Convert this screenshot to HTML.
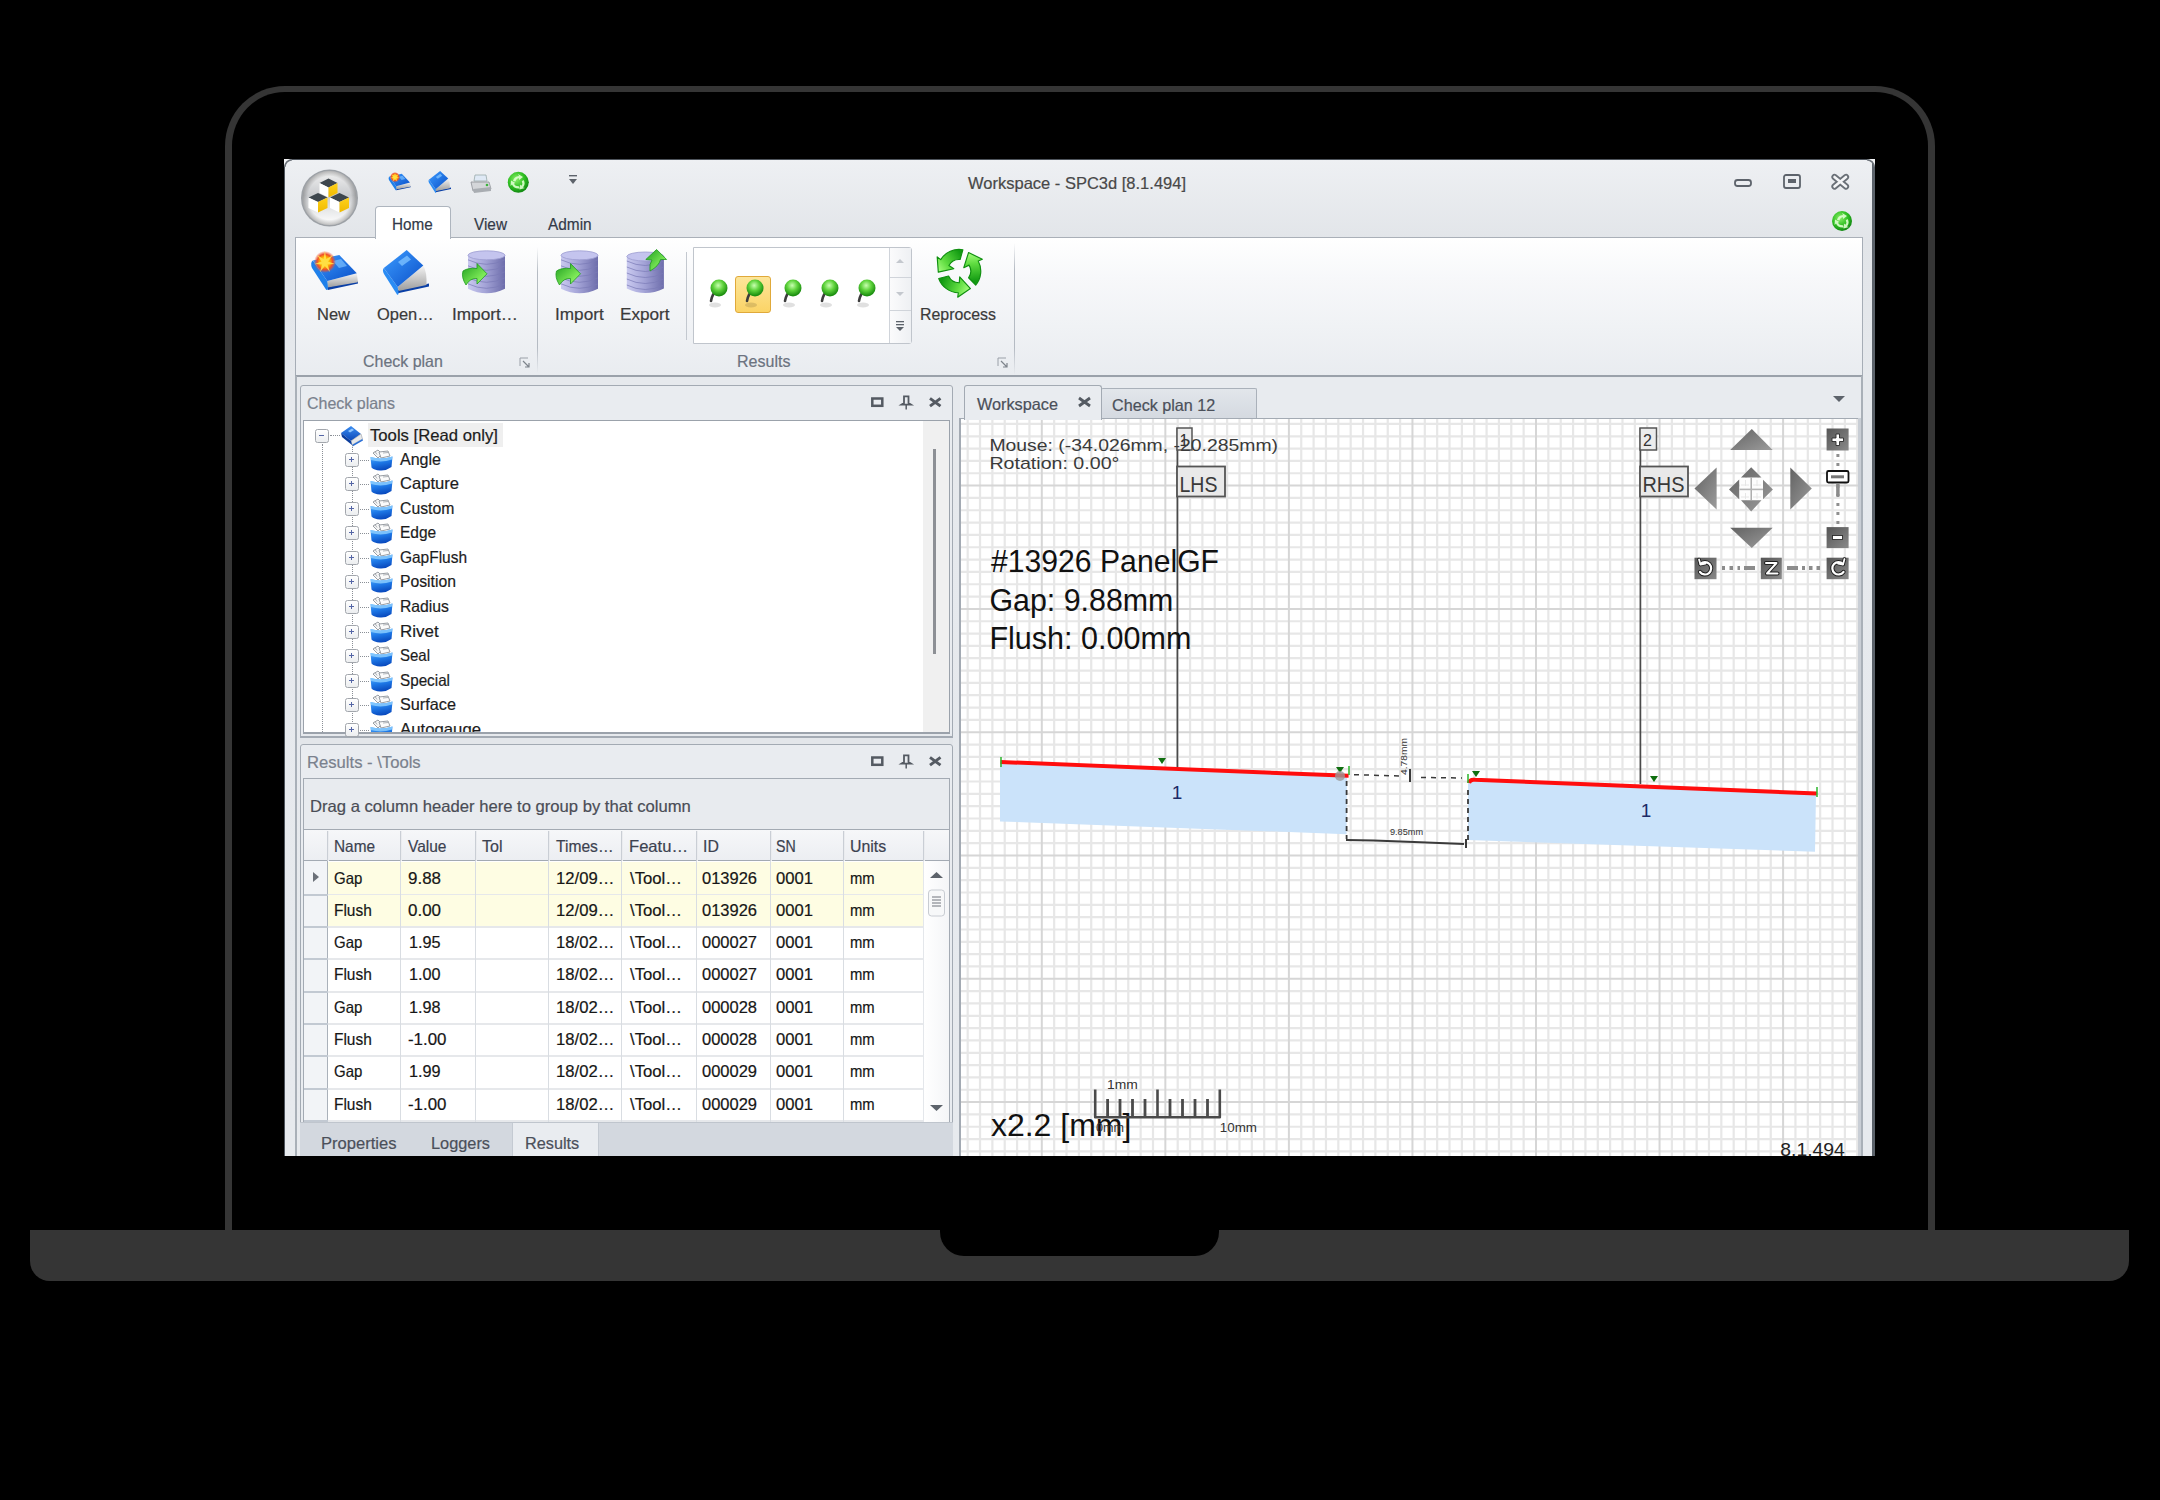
<!DOCTYPE html>
<html><head><meta charset="utf-8">
<style>
*{box-sizing:border-box;margin:0;padding:0}
html,body{width:2160px;height:1500px;background:#000;overflow:hidden;font-family:"Liberation Sans",sans-serif;}
.a{position:absolute}
.t{position:absolute;white-space:nowrap;line-height:1;color:#2c2c2c;-webkit-text-stroke:0.2px currentColor}
#lid{left:225px;top:86px;width:1710px;height:1180px;border:7px solid #353535;border-top-width:6px;border-bottom:none;border-radius:60px 60px 0 0}
#base{left:30px;top:1230px;width:2099px;height:51px;background:#353535;border-radius:0 0 20px 20px}
#notch{left:940px;top:1230px;width:279px;height:26px;background:#000;border-radius:0 0 24px 24px}
#scr{left:284px;top:159px;width:1591px;height:997px;background:#e3e6ea;overflow:hidden}

#win{left:0;top:0;width:1591px;height:997px;background:linear-gradient(#eef0f3,#e2e5e9 80px,#e6e9ed 220px,#e7eaee);border-left:1px solid #4e545c;border-top:1px solid #4e545c}
#winr{left:1588px;top:0;width:3px;height:997px;background:#5c636b}
#rib{left:11px;top:78px;width:1568px;height:140px;border:1px solid #a6adb6;border-top:1.5px solid #aab0b8;border-bottom:2px solid #9aa1aa;background:linear-gradient(#ffffff,#f7f8fa 40px,#e9ecf0);}
#hometab{left:91px;top:47px;width:76px;height:33px;z-index:1;background:#ffffff;border:1px solid #aeb5be;border-bottom:none;border-radius:4px 4px 0 0}
.rtab{font-size:16.5px;color:#333a48}
.rl{font-size:16.5px;color:#3a3a3a}
.gl{font-size:16.5px;color:#6c7380}
.sep{position:absolute;width:1px;background:linear-gradient(rgba(170,176,185,0),#b5bbc3 20%,#b5bbc3 80%,rgba(170,176,185,0))}

.pnl{position:absolute;border:1px solid #a3aab3;border-radius:3px 3px 0 0;background:#e9ecf0}
.ph{font-size:16.5px;color:#7a818d}
.tr{font-size:16.5px;color:#1c1c1c}
.exp{position:absolute;z-index:1;width:14px;height:14px;border:1.6px solid #a2a6ac;border-radius:2.5px;background:linear-gradient(#ffffff,#eceef0)}
.exp:before{content:"";position:absolute;left:2.7px;top:4.9px;width:5.4px;height:1.6px;background:#5566a6}
.exp.p:after{content:"";position:absolute;left:4.6px;top:2.9px;width:1.6px;height:5.6px;background:#5566a6}
.dh{position:absolute;height:1px;border-top:1px dotted #8a8f96}
.dv{position:absolute;width:1px;border-left:1px dotted #8a8f96}
.gh{font-size:16.5px;color:#3c4250}
.gc{font-size:16.5px;color:#161616}
.vl{position:absolute;width:1px;background:#d9dde2}
.hl{position:absolute;height:1px;background:#d9dde2}
</style></head>
<body>
<div id="lid" class="a"></div>
<div id="base" class="a"></div>
<div id="notch" class="a"></div>
<div id="scr" class="a">

<div id="win" class="a"></div>
<div id="winr" class="a"></div>
<svg class="a" style="left:0;top:0;z-index:5" width="10" height="10" viewBox="0 0 10 10"><path d="M0 0 H8 Q1.5 1.5 0 8Z" fill="#f2f3f5"/><path d="M8 0.8 Q1.5 1.5 0.8 8" stroke="#6b7178" stroke-width="1.5" fill="none"/></svg>
<svg class="a" style="left:1581px;top:0;z-index:5" width="10" height="10" viewBox="0 0 10 10"><path d="M10 0 H2 Q8.5 1.5 10 8Z" fill="#f2f3f5"/><path d="M2 0.8 Q8.5 1.5 9.2 8" stroke="#6b7178" stroke-width="1.5" fill="none"/></svg>
<!-- title -->
<div class="t" style="left:683.8px;top:15.6px;font-size:16.5px;color:#484848;transform-origin:0 0;transform:scaleX(1.0001)">Workspace - SPC3d [8.1.494]</div>
<!-- window buttons -->
<svg class="a" style="left:1448px;top:14px" width="120" height="22" viewBox="0 0 120 22">
 <rect x="3" y="7" width="16" height="6" rx="2.5" fill="none" stroke="#5d636b" stroke-width="1.8"/>
 <rect x="52" y="2" width="16" height="13" rx="2" fill="none" stroke="#5d636b" stroke-width="1.8"/>
 <rect x="56" y="6" width="8" height="4" fill="#5d636b"/>
 <path d="M102.5 4 L114 13.5 M114 4 L102.5 13.5" stroke="#6a7077" stroke-width="6.2" stroke-linecap="round"/>
 <path d="M102.5 4 L114 13.5 M114 4 L102.5 13.5" stroke="#f4f5f7" stroke-width="2.6" stroke-linecap="round"/>
</svg>
<!-- app logo -->
<svg class="a" style="left:-284px;top:-159px;z-index:1" width="2160" height="1500" viewBox="0 0 2160 1500">
 <defs>
  <linearGradient id="lgA" x1="0" y1="0" x2="0" y2="1"><stop offset="0" stop-color="#f2f2f2"/><stop offset="0.45" stop-color="#c9cbce"/><stop offset="0.75" stop-color="#e9eaeb"/><stop offset="1" stop-color="#ffffff"/></linearGradient>
  <radialGradient id="lgB" cx="50%" cy="50%" r="50%"><stop offset="0.8" stop-color="#000" stop-opacity="0"/><stop offset="1" stop-color="#000" stop-opacity="0.25"/></radialGradient>
  <linearGradient id="yl" x1="0" y1="0" x2="0" y2="1"><stop offset="0" stop-color="#ffd21a"/><stop offset="1" stop-color="#efb900"/></linearGradient>
 </defs>
 <circle cx="329.5" cy="198" r="28.5" fill="#9da1a6"/>
 <circle cx="329.5" cy="198" r="27" fill="url(#lgA)"/>
 <circle cx="329.5" cy="198" r="27" fill="url(#lgB)"/>
 <path d="M328.5 178.5 L337.5 183 L328.5 187.5 L319.5 183Z" fill="#3d464d"/><path d="M319.5 183 L328.5 187.5 L328.5 197.5 L319.5 193Z" fill="#ffffff"/><path d="M337.5 183 L328.5 187.5 L328.5 197.5 L337.5 193Z" fill="url(#yl)"/>
 <path d="M318 193.0 L327.5 197.5 L318 202.0 L308.5 197.5Z" fill="#3d464d"/><path d="M308.5 197.5 L318 202.0 L318 212.5 L308.5 208.0Z" fill="#ffffff"/><path d="M327.5 197.5 L318 202.0 L318 212.5 L327.5 208.0Z" fill="url(#yl)"/>
 <path d="M339.5 193.0 L349.0 197.5 L339.5 202.0 L330.0 197.5Z" fill="#3d464d"/><path d="M330.0 197.5 L339.5 202.0 L339.5 212.5 L330.0 208.0Z" fill="#ffffff"/><path d="M349.0 197.5 L339.5 202.0 L339.5 212.5 L349.0 208.0Z" fill="url(#yl)"/>
</svg>
<!-- QAT icons -->
<svg class="a" style="left:102px;top:10px" width="300" height="26" viewBox="0 0 300 26">
 <defs>
  <linearGradient id="bk" x1="0" y1="0" x2="0" y2="1"><stop offset="0" stop-color="#3a8cf0"/><stop offset="1" stop-color="#0a47b8"/></linearGradient>
  <radialGradient id="gr" cx="40%" cy="35%" r="60%"><stop offset="0" stop-color="#9cf07c"/><stop offset="1" stop-color="#1f9a12"/></radialGradient>
 </defs>
 <g transform="translate(83,3)">
  <path d="M6 3 L17 3 L18 9 L5 9Z" fill="#dfe9f5" stroke="#9aa" stroke-width="0.8"/>
  <path d="M2 10 L20 10 L22 17 L4 19Z" fill="#d4d6d9" stroke="#8d9196" stroke-width="0.8"/>
  <path d="M4 17 L22 15 L22 19 L5 21Z" fill="#a9adb2"/>
  <circle cx="18" cy="13" r="1.3" fill="#3bb33b"/>
 </g>
  <g transform="translate(183,6)">
  <rect x="0" y="0" width="8" height="1.4" fill="#5d636b"/><path d="M0 4 L8 4 L4 9Z" fill="#5d636b"/>
 </g>
</svg>
<svg class="a" style="left:223px;top:12px" width="24" height="24" viewBox="0 0 24 24">
 <defs><radialGradient id="qb" cx="40%" cy="35%" r="65%"><stop offset="0" stop-color="#8cf06a"/><stop offset="0.6" stop-color="#2fbf22"/><stop offset="1" stop-color="#128a12"/></radialGradient></defs>
 <circle cx="11.3" cy="11.3" r="10.5" fill="url(#qb)"/>
 <path d="M6 10 Q7 5.5 12 5 L11 3 L16 6 L12 9 L12 7.3 Q9 7.5 8.5 10.5Z M16.5 9 Q19 12.5 16 16.5 L18 17 L12.5 18.5 L13 13.5 L14.3 14.8 Q16.2 12.8 14.8 10.2Z M12.5 17.5 Q7 18 5 13.5 L3.5 15 L4 9.5 L8.5 12 L6.8 12.7 Q8.5 15.5 12 15.2Z" fill="#dfffd0" opacity="0.9"/>
</svg>
<!-- tabs -->

<div class="t rtab" style="left:189.6px;top:56.7px;transform-origin:0 0;transform:scaleX(0.9304)">View</div>
<div class="t rtab" style="left:263.5px;top:56.7px;transform-origin:0 0;transform:scaleX(0.9341)">Admin</div>
<!-- ribbon right icon -->
<svg class="a" style="left:1547px;top:51px" width="24" height="24" viewBox="0 0 24 24">
 <circle cx="11" cy="11" r="10" fill="url(#qb)"/>
 <path d="M6 10 Q7 5.5 12 5 L11 3 L16 6 L12 9 L12 7.3 Q9 7.5 8.5 10.5Z M16.5 9 Q19 12.5 16 16.5 L18 17 L12.5 18.5 L13 13.5 L14.3 14.8 Q16.2 12.8 14.8 10.2Z M12.5 17.5 Q7 18 5 13.5 L3.5 15 L4 9.5 L8.5 12 L6.8 12.7 Q8.5 15.5 12 15.2Z" fill="#dfffd0" opacity="0.9"/>
</svg>
<div id="rib" class="a"></div>
<div id="hometab" class="a"></div>
<div class="t rtab" style="left:108.0px;top:56.7px;z-index:2;transform-origin:0 0;transform:scaleX(0.9247)">Home</div>
<!-- ribbon group 1 -->
<svg class="a" style="left:-284px;top:-159px" width="2160" height="1500" viewBox="0 0 2160 1500">
 <defs>
  <linearGradient id="bkL" x1="0" y1="0" x2="1" y2="1"><stop offset="0" stop-color="#3c9cff"/><stop offset="1" stop-color="#0a4fc8"/></linearGradient>
  <linearGradient id="pg" x1="0" y1="0" x2="0" y2="1"><stop offset="0" stop-color="#f4f4f4"/><stop offset="1" stop-color="#9c9c9c"/></linearGradient>
  <linearGradient id="db" x1="0" y1="0" x2="1" y2="0"><stop offset="0" stop-color="#c9c9ef"/><stop offset="0.45" stop-color="#a5a5d8"/><stop offset="1" stop-color="#6d6dab"/></linearGradient>
  <linearGradient id="ga" x1="0" y1="0" x2="1" y2="1"><stop offset="0" stop-color="#1e9e1e"/><stop offset="0.7" stop-color="#7eea58"/><stop offset="1" stop-color="#b8ff9a"/></linearGradient>
  <radialGradient id="burst" cx="50%" cy="50%" r="50%"><stop offset="0" stop-color="#ffd400"/><stop offset="0.45" stop-color="#ffb000"/><stop offset="0.7" stop-color="#f0502a"/><stop offset="1" stop-color="#f0502a" stop-opacity="0"/></radialGradient>
 </defs>
<g id="bookNew">
 <!-- New book -->
 <path d="M327.9 290 L358 283.5 L358 281 L327.5 287Z" fill="#0a3fa6"/>
 <path d="M327.3 281 L356.8 273.3 L358 282.3 L327.3 287.6Z" fill="url(#pg)"/>
 <path d="M312.8 260.6 Q310 263 312 268 L326 289.5 Q328 291 328 288 L327.3 281.1Z" fill="#1f80ea"/>
 <path d="M312.8 260.6 L339.3 254.9 L356.8 273.3 L327.3 281.1Z" fill="url(#bkL)"/>
 <path d="M333 261 L341 259 L347 266 L339 268Z" fill="#7cc0ff" opacity="0.7"/>
 <circle cx="324.9" cy="261.9" r="11" fill="url(#burst)"/>
 <path d="M324.9 251 L326.3 259 L333 255 L328 261.5 L335 264 L327.5 264.5 L330 272 L324.9 266 L320 272 L322 264.5 L314.5 264 L321.5 261.5 L317 255 L323.5 259Z" fill="#ffe14a" opacity="0.9"/>
</g>
<g id="bookOpen">
 <!-- Open book -->
 <path d="M397.8 293.2 L429 286.5 L429 283.5 L398 290Z" fill="#0a3fa6"/>
 <path d="M423.3 265.5 Q427 272 426.5 285 L398.5 291 L397.7 287.1Z" fill="url(#pg)"/>
 <path d="M383.8 267.9 Q382 270 384 274 L397 294.4 Q399 295.5 398.5 292 L397.7 287.1Z" fill="#2a8cf4"/>
 <path d="M406.7 250.1 L423.3 265.5 L397.7 287.1 L383.8 267.9Z" fill="url(#bkL)"/>
 <path d="M398 262 L407 255.5 L411 259.5 L402 266Z" fill="#7cc0ff" opacity="0.8"/>
</g>
 <!-- Import... -->
 <path d="M468 255.3 L468 288.8 Q486.5 297.8 505 288.8 L505 255.3Z" fill="url(#db)"/>
 <path d="M468 259.8 Q486.5 268.8 505 259.8 M468 265.8 Q486.5 274.8 505 265.8 M468 271.8 Q486.5 280.8 505 271.8 M468 277.8 Q486.5 286.8 505 277.8 M468 283.8 Q486.5 292.8 505 283.8" stroke="#7b7bb6" stroke-width="0.9" fill="none" opacity="0.8"/>
 <ellipse cx="486.5" cy="255.3" rx="18.5" ry="4.5" fill="#c4c4ee" stroke="#9d9dd0" stroke-width="0.8"/>
 <path d="M463 271 Q468 267.5 477 268.5 L477 263.5 L487 273.8 L477 284 L477 278.5 Q470 278 466 285 Q461 277 463 271Z" fill="url(#ga)" stroke="#1f9a1f" stroke-width="0.8"/>
 <!-- Import -->
 <path d="M561 255.3 L561 288.8 Q579.5 297.8 598 288.8 L598 255.3Z" fill="url(#db)"/>
 <path d="M561 259.8 Q579.5 268.8 598 259.8 M561 265.8 Q579.5 274.8 598 265.8 M561 271.8 Q579.5 280.8 598 271.8 M561 277.8 Q579.5 286.8 598 277.8 M561 283.8 Q579.5 292.8 598 283.8" stroke="#7b7bb6" stroke-width="0.9" fill="none" opacity="0.8"/>
 <ellipse cx="579.5" cy="255.3" rx="18.5" ry="4.5" fill="#c4c4ee" stroke="#9d9dd0" stroke-width="0.8"/>
 <path d="M556.5 271 Q561.5 267.5 570.5 268.5 L570.5 263.5 L580.5 273.8 L570.5 284 L570.5 278.5 Q563.5 278 559.5 285 Q554.5 277 556.5 271Z" fill="url(#ga)" stroke="#1f9a1f" stroke-width="0.8"/>
 <!-- Export -->
 <path d="M626.8 256.5 L626.8 288.5 Q645.3499999999999 297.5 663.9 288.5 L663.9 256.5Z" fill="url(#db)"/>
 <path d="M626.8 261 Q645.3499999999999 270.0 663.9 261 M626.8 267 Q645.3499999999999 276.0 663.9 267 M626.8 273 Q645.3499999999999 282.0 663.9 273 M626.8 279 Q645.3499999999999 288.0 663.9 279 M626.8 285 Q645.3499999999999 294.0 663.9 285" stroke="#7b7bb6" stroke-width="0.9" fill="none" opacity="0.8"/>
 <ellipse cx="645.3499999999999" cy="256.5" rx="18.55000000000001" ry="4.5" fill="#c4c4ee" stroke="#9d9dd0" stroke-width="0.8"/>
 <path d="M650 271 Q649 264 652 260 L645.8 259.5 L656.6 249.5 L666.6 259.5 L660.5 259.5 Q659 266 650 271Z" fill="url(#ga)" stroke="#1f9a1f" stroke-width="0.8"/>
</svg>
<svg class="a" style="left:-284px;top:-159px" width="2160" height="1500" viewBox="0 0 2160 1500">
 <use href="#bookNew" transform="translate(388,172) scale(0.47) translate(-310,-251)"/>
 <use href="#bookOpen" transform="translate(428,171) scale(0.49) translate(-382,-250)"/>
</svg>
<div class="t rl" style="left:33.0px;top:146.7px;transform-origin:0 0;transform:scaleX(0.9995)">New</div>
<div class="t rl" style="left:93.0px;top:146.7px;transform-origin:0 0;transform:scaleX(0.9969)">Open…</div>
<div class="t rl" style="left:168.2px;top:146.7px;transform-origin:0 0;transform:scaleX(1.0432)">Import…</div>
<div class="t rl" style="left:271.2px;top:146.7px;transform-origin:0 0;transform:scaleX(1.0414)">Import</div>
<div class="t rl" style="left:336.4px;top:146.7px;transform-origin:0 0;transform:scaleX(1.0401)">Export</div>
<div class="t gl" style="left:78.7px;top:193.7px;transform-origin:0 0;transform:scaleX(0.9665)">Check plan</div>
<div class="t gl" style="left:453.4px;top:193.7px;transform-origin:0 0;transform:scaleX(0.9704)">Results</div>
<div class="sep" style="left:253px;top:88px;height:126px"></div>
<div class="sep" style="left:402px;top:93px;height:88px;background:#c3c8cf"></div>
<div class="sep" style="left:730px;top:84px;height:132px"></div>
<!-- dialog launchers -->
<svg class="a" style="left:235px;top:198px" width="12" height="12" viewBox="0 0 12 12"><path d="M1 9 L1 1 L9 1" stroke="#9aa0a8" fill="none"/><path d="M4 4 L10 10 M10 6 L10 10 L6 10" stroke="#7d838b" fill="none" stroke-width="1.2"/></svg>
<svg class="a" style="left:713px;top:198px" width="12" height="12" viewBox="0 0 12 12"><path d="M1 9 L1 1 L9 1" stroke="#9aa0a8" fill="none"/><path d="M4 4 L10 10 M10 6 L10 10 L6 10" stroke="#7d838b" fill="none" stroke-width="1.2"/></svg>
<!-- gallery -->
<div class="a" style="left:409px;top:88px;width:219px;height:97px;border:1px solid #c0c5cc;border-radius:0 3px 3px 0;background:#fff"></div>
<div class="a" style="left:605px;top:89px;width:22px;height:95px;border-left:1px solid #d0d4da;background:linear-gradient(90deg,#fbfbfc,#eef0f3)"></div>
<div class="a" style="left:605px;top:118px;width:22px;height:1px;background:#d0d4da"></div>
<div class="a" style="left:605px;top:151px;width:22px;height:1px;background:#d0d4da"></div>
<svg class="a" style="left:605px;top:89px" width="22" height="95" viewBox="0 0 22 95">
 <path d="M7 15 L11 11 L15 15Z" fill="#c4c8ce"/><path d="M7 44 L11 48 L15 44Z" fill="#c4c8ce"/>
 <rect x="7" y="73" width="8" height="1.3" fill="#5d636b"/><rect x="7" y="76" width="8" height="1.3" fill="#5d636b"/><path d="M7 79 L15 79 L11 83Z" fill="#5d636b"/>
</svg>
<div class="a" style="left:451px;top:117px;width:36px;height:37px;border:1px solid #e0a93a;border-radius:3px;background:linear-gradient(#fde59a,#fbd466)"></div>
<svg class="a" style="left:420px;top:118px" width="180" height="40" viewBox="0 0 180 40">
 <defs><radialGradient id="pin" cx="45%" cy="35%" r="60%"><stop offset="0" stop-color="#c8ffb0"/><stop offset="0.5" stop-color="#5fd33c"/><stop offset="1" stop-color="#1c8f10"/></radialGradient></defs>
 <g id="pn"><ellipse cx="11" cy="28" rx="6" ry="2.5" fill="#000" opacity="0.12"/><path d="M13 13 Q8 17 7 24" stroke="#3d3d3d" stroke-width="2.6" stroke-linecap="round" fill="none"/><circle cx="15" cy="11" r="8.5" fill="url(#pin)"/></g>
 <use href="#pn" x="36"/><use href="#pn" x="74"/><use href="#pn" x="111"/><use href="#pn" x="148"/>
</svg>
<!-- reprocess -->
<svg class="a" style="left:647.5px;top:85.1px" width="54.2" height="54.2" viewBox="-5 -5 56 56">
<defs>
<linearGradient id="rc0" gradientUnits="userSpaceOnUse" x1="26.0" y1="6.3" x2="1.5" y2="24.1"><stop offset="0" stop-color="#129a12"/><stop offset="0.6" stop-color="#5fdc40"/><stop offset="1" stop-color="#a8ff80"/></linearGradient>
<linearGradient id="rc1" gradientUnits="userSpaceOnUse" x1="36.0" y1="33.9" x2="32.8" y2="3.8"><stop offset="0" stop-color="#129a12"/><stop offset="0.6" stop-color="#5fdc40"/><stop offset="1" stop-color="#a8ff80"/></linearGradient>
<linearGradient id="rc2" gradientUnits="userSpaceOnUse" x1="7.0" y1="28.8" x2="34.7" y2="41.0"><stop offset="0" stop-color="#129a12"/><stop offset="0.6" stop-color="#5fdc40"/><stop offset="1" stop-color="#a8ff80"/></linearGradient>
</defs>
<path d="M26.89 0.94 A22.40 22.40 0 0 0 4.00 11.13 L0.36 8.29 L1.53 24.13 L17.52 20.56 L12.50 17.18 A12.00 12.00 0 0 1 24.05 11.05Z" fill="url(#rc0)" stroke="#0f8f0f" stroke-width="1.2" stroke-linejoin="round"/>
<path d="M40.16 37.40 A22.40 22.40 0 0 0 42.78 12.48 L47.06 10.74 L32.76 3.84 L27.85 19.47 L33.29 16.82 A12.00 12.00 0 0 1 32.83 29.88Z" fill="url(#rc1)" stroke="#0f8f0f" stroke-width="1.2" stroke-linejoin="round"/>
<path d="M1.95 30.66 A22.40 22.40 0 0 0 22.22 45.39 L21.59 49.96 L34.71 41.03 L23.63 28.97 L23.21 35.00 A12.00 12.00 0 0 1 12.12 28.07Z" fill="url(#rc2)" stroke="#0f8f0f" stroke-width="1.2" stroke-linejoin="round"/>
</svg>
<div class="t rl" style="left:636.0px;top:146.7px;transform-origin:0 0;transform:scaleX(0.9635)">Reprocess</div>
<div class="pnl" style="left:16px;top:226px;width:653px;height:352px"></div>
<div class="t ph" style="left:23.0px;top:235.6px;transform-origin:0 0;transform:scaleX(0.9690)">Check plans</div>
<svg class="a" style="left:584px;top:236px" width="80" height="16" viewBox="0 0 80 16">
 <rect x="4.3" y="3.5" width="10" height="7.3" fill="none" stroke="#545a62" stroke-width="2.5"/>
 <path d="M36 1.3 L40.5 1.3 L40.5 8 L43 9.6 L33.5 9.6 L36 8Z" fill="none" stroke="#545a62" stroke-width="1.8"/><path d="M38.2 10 L38.2 14.5" stroke="#545a62" stroke-width="1.5"/>
 <path d="M62 3.3 L72.5 11.2 M72.5 3.3 L62 11.2" stroke="#545a62" stroke-width="2.9"/>
</svg>
<div class="a" style="left:19px;top:261px;width:647px;height:315px;border:1px solid #9ba2ab;border-bottom:2px solid #9ba2ab;background:#fff"></div>
<div class="a" style="left:639px;top:262px;width:26px;height:312px;background:#f0f0f0"></div>
<div class="a" style="left:649px;top:290px;width:3px;height:205px;background:#8d9095"></div>
<svg width="0" height="0" style="position:absolute"><defs>
<linearGradient id="fb" x1="0" y1="0" x2="0.3" y2="1"><stop offset="0" stop-color="#55b0ff"/><stop offset="0.5" stop-color="#1f7ae8"/><stop offset="1" stop-color="#0a4cc0"/></linearGradient>
<g id="fold"><path d="M4 4 L9 1 L13 5 L9 9Z" fill="#f6f6f6" stroke="#8d939a" stroke-width="0.9"/>
<path d="M10 3 L19 2 L21 7 L12 9Z" fill="#fbfbfb" stroke="#8d939a" stroke-width="0.9"/>
<path d="M6 2.5 L8 5.5 M14 4 L19 3.5" stroke="#9aa0a6" stroke-width="0.8"/>
<path d="M1.5 8 Q12 11 23.5 7.5 L22.5 18 Q17 22 11 21.5 Q5 21 2.5 18.5Z" fill="url(#fb)"/>
<path d="M1.5 8 Q12 11 23.5 7.5 L23 10.5 Q12 14 2 11Z" fill="#8fd0ff" opacity="0.8"/></g>
</defs></svg>
<div class="a" style="left:84px;top:264px;width:135px;height:24px;background:#efefef"></div>
<div class="exp" style="left:31px;top:270px"></div>
<div class="dh" style="left:46px;top:276px;width:10px"></div>
<svg class="a" style="left:56px;top:266px" width="24" height="22" viewBox="0 0 24 22"><path d="M1 8 L11 1 L21 9 L11 16Z" fill="url(#bk)"/><path d="M8 6 L12 3.5 L14 5 L10 7.5Z" fill="#8cc4ff"/><path d="M11 16 L21 9 L22.5 14 L12 20Z" fill="#e6e8ea" stroke="#9aa0a6" stroke-width="0.6"/><path d="M1 8 L11 16 L12 20 L2 12Z" fill="#0b3d9c"/><path d="M12 20 L22.5 14 L23 15.5 L12.5 21.5Z" fill="#2a6fd6"/></svg>
<div class="t tr" style="left:85.8px;top:267.6px;transform-origin:0 0;transform:scaleX(1.0112)">Tools [Read only]</div>
<div class="dv" style="left:38px;top:285px;height:290px"></div>
<div class="exp p" style="left:61px;top:294px"></div>
<div class="dh" style="left:76px;top:301px;width:9px"></div>
<svg class="a" style="left:85px;top:290px" width="26" height="22" viewBox="0 0 26 22"><use href="#fold"/></svg>
<div class="t tr" style="left:115.7px;top:291.6px;transform-origin:0 0;transform:scaleX(0.9715)">Angle</div>
<div class="exp p" style="left:61px;top:318px"></div>
<div class="dh" style="left:76px;top:325px;width:9px"></div>
<svg class="a" style="left:85px;top:314px" width="26" height="22" viewBox="0 0 26 22"><use href="#fold"/></svg>
<div class="t tr" style="left:115.7px;top:315.6px;transform-origin:0 0;transform:scaleX(1.0051)">Capture</div>
<div class="exp p" style="left:61px;top:343px"></div>
<div class="dh" style="left:76px;top:350px;width:9px"></div>
<svg class="a" style="left:85px;top:339px" width="26" height="22" viewBox="0 0 26 22"><use href="#fold"/></svg>
<div class="t tr" style="left:115.7px;top:340.6px;transform-origin:0 0;transform:scaleX(0.9550)">Custom</div>
<div class="exp p" style="left:61px;top:367px"></div>
<div class="dh" style="left:76px;top:374px;width:9px"></div>
<svg class="a" style="left:85px;top:363px" width="26" height="22" viewBox="0 0 26 22"><use href="#fold"/></svg>
<div class="t tr" style="left:115.7px;top:364.6px;transform-origin:0 0;transform:scaleX(0.9391)">Edge</div>
<div class="exp p" style="left:61px;top:392px"></div>
<div class="dh" style="left:76px;top:399px;width:9px"></div>
<svg class="a" style="left:85px;top:388px" width="26" height="22" viewBox="0 0 26 22"><use href="#fold"/></svg>
<div class="t tr" style="left:115.7px;top:389.6px;transform-origin:0 0;transform:scaleX(0.9364)">GapFlush</div>
<div class="exp p" style="left:61px;top:416px"></div>
<div class="dh" style="left:76px;top:423px;width:9px"></div>
<svg class="a" style="left:85px;top:412px" width="26" height="22" viewBox="0 0 26 22"><use href="#fold"/></svg>
<div class="t tr" style="left:115.7px;top:413.6px;transform-origin:0 0;transform:scaleX(0.9540)">Position</div>
<div class="exp p" style="left:61px;top:441px"></div>
<div class="dh" style="left:76px;top:448px;width:9px"></div>
<svg class="a" style="left:85px;top:437px" width="26" height="22" viewBox="0 0 26 22"><use href="#fold"/></svg>
<div class="t tr" style="left:115.7px;top:438.6px;transform-origin:0 0;transform:scaleX(0.9538)">Radius</div>
<div class="exp p" style="left:61px;top:466px"></div>
<div class="dh" style="left:76px;top:473px;width:9px"></div>
<svg class="a" style="left:85px;top:462px" width="26" height="22" viewBox="0 0 26 22"><use href="#fold"/></svg>
<div class="t tr" style="left:115.7px;top:463.6px;transform-origin:0 0;transform:scaleX(1.0268)">Rivet</div>
<div class="exp p" style="left:61px;top:490px"></div>
<div class="dh" style="left:76px;top:497px;width:9px"></div>
<svg class="a" style="left:85px;top:486px" width="26" height="22" viewBox="0 0 26 22"><use href="#fold"/></svg>
<div class="t tr" style="left:115.7px;top:487.6px;transform-origin:0 0;transform:scaleX(0.9082)">Seal</div>
<div class="exp p" style="left:61px;top:515px"></div>
<div class="dh" style="left:76px;top:522px;width:9px"></div>
<svg class="a" style="left:85px;top:511px" width="26" height="22" viewBox="0 0 26 22"><use href="#fold"/></svg>
<div class="t tr" style="left:115.7px;top:512.6px;transform-origin:0 0;transform:scaleX(0.9238)">Special</div>
<div class="exp p" style="left:61px;top:539px"></div>
<div class="dh" style="left:76px;top:546px;width:9px"></div>
<svg class="a" style="left:85px;top:535px" width="26" height="22" viewBox="0 0 26 22"><use href="#fold"/></svg>
<div class="t tr" style="left:115.7px;top:536.6px;transform-origin:0 0;transform:scaleX(0.9846)">Surface</div>
<div class="exp p" style="left:61px;top:564px"></div>
<div class="dh" style="left:76px;top:571px;width:9px"></div>
<svg class="a" style="left:85px;top:560px" width="26" height="22" viewBox="0 0 26 22"><use href="#fold"/></svg>
<div class="t tr" style="left:115.7px;top:561.6px;transform-origin:0 0;transform:scaleX(1.0147)">Autogauge</div>
<div class="dv" style="left:68px;top:286px;height:289px"></div>
<div class="a" style="left:19px;top:573px;width:647px;height:2px;background:#9ba2ab"></div>
<div class="a" style="left:17px;top:575px;width:651px;height:2px;background:#e6e9ed"></div>
<div class="a" style="left:16px;top:577px;width:653px;height:1.6px;background:#a3aab3"></div>
<div class="a" style="left:16px;top:578.6px;width:653px;height:6.4px;background:#e3e6ea"></div>
<div class="pnl" style="left:16px;top:585px;width:653px;height:381px"></div>
<div class="t ph" style="left:23.3px;top:594.6px;transform-origin:0 0;transform:scaleX(1.0080)">Results - \Tools</div>
<svg class="a" style="left:584px;top:595px" width="80" height="16" viewBox="0 0 80 16">
 <rect x="4.3" y="3.5" width="10" height="7.3" fill="none" stroke="#545a62" stroke-width="2.5"/>
 <path d="M36 1.3 L40.5 1.3 L40.5 8 L43 9.6 L33.5 9.6 L36 8Z" fill="none" stroke="#545a62" stroke-width="1.8"/><path d="M38.2 10 L38.2 14.5" stroke="#545a62" stroke-width="1.5"/>
 <path d="M62 3.3 L72.5 11.2 M72.5 3.3 L62 11.2" stroke="#545a62" stroke-width="2.9"/>
</svg>
<div class="a" style="left:19px;top:619px;width:647px;height:345px;border:1px solid #a3aab3;background:#fff"></div>
<div class="a" style="left:20px;top:620px;width:645px;height:51px;background:#e8ebef;border-bottom:1px solid #a3aab3"></div>
<div class="t" style="left:26.0px;top:638.6px;font-size:16.5px;color:#4a4d56;transform-origin:0 0;transform:scaleX(1.0077)">Drag a column header here to group by that column</div>
<div class="a" style="left:20px;top:671px;width:645px;height:31px;background:linear-gradient(#f6f7f9,#eceef2);border-bottom:1px solid #a3aab3"></div>
<div class="t gh" style="left:49.6px;top:678.6px;transform-origin:0 0;transform:scaleX(0.9315)">Name</div>
<div class="t gh" style="left:123.6px;top:678.6px;transform-origin:0 0;transform:scaleX(0.9394)">Value</div>
<div class="t gh" style="left:197.5px;top:678.6px;transform-origin:0 0;transform:scaleX(0.9719)">Tol</div>
<div class="t gh" style="left:271.5px;top:678.6px;transform-origin:0 0;transform:scaleX(0.9455)">Times…</div>
<div class="t gh" style="left:344.7px;top:678.6px;transform-origin:0 0;transform:scaleX(1.0051)">Featu…</div>
<div class="t gh" style="left:418.6px;top:678.6px;transform-origin:0 0;transform:scaleX(0.9576)">ID</div>
<div class="t gh" style="left:491.8px;top:678.6px;transform-origin:0 0;transform:scaleX(0.8594)">SN</div>
<div class="t gh" style="left:565.8px;top:678.6px;transform-origin:0 0;transform:scaleX(0.9629)">Units</div>
<div class="a" style="left:43px;top:672px;width:2px;height:30px;background:linear-gradient(90deg,#b9bfc8,#fbfbfc)"></div>
<div class="a" style="left:116px;top:672px;width:2px;height:30px;background:linear-gradient(90deg,#b9bfc8,#fbfbfc)"></div>
<div class="a" style="left:191px;top:672px;width:2px;height:30px;background:linear-gradient(90deg,#b9bfc8,#fbfbfc)"></div>
<div class="a" style="left:264px;top:672px;width:2px;height:30px;background:linear-gradient(90deg,#b9bfc8,#fbfbfc)"></div>
<div class="a" style="left:337px;top:672px;width:2px;height:30px;background:linear-gradient(90deg,#b9bfc8,#fbfbfc)"></div>
<div class="a" style="left:412px;top:672px;width:2px;height:30px;background:linear-gradient(90deg,#b9bfc8,#fbfbfc)"></div>
<div class="a" style="left:486px;top:672px;width:2px;height:30px;background:linear-gradient(90deg,#b9bfc8,#fbfbfc)"></div>
<div class="a" style="left:559px;top:672px;width:2px;height:30px;background:linear-gradient(90deg,#b9bfc8,#fbfbfc)"></div>
<div class="a" style="left:639px;top:672px;width:2px;height:30px;background:linear-gradient(90deg,#b9bfc8,#fbfbfc)"></div>
<div class="a" style="left:20px;top:702px;width:24px;height:261px;background:#f2f4f7;border-right:1px solid #aab1ba"></div>
<div class="a" style="left:44px;top:703px;width:595px;height:32px;background:#fefde3"></div>
<div class="a" style="height:2px;background:#e6e8eb;left:44px;top:735px;width:595px"></div>
<div class="a" style="left:20px;top:735px;width:24px;height:2px;background:#c2c9d2"></div>
<div class="t gc" style="left:49.6px;top:711.1px;transform-origin:0 0;transform:scaleX(0.9074)">Gap</div>
<div class="t gc" style="left:123.6px;top:711.1px;transform-origin:0 0;transform:scaleX(1.0272)">9.88</div>
<div class="t gc" style="left:272.3px;top:711.1px;transform-origin:0 0;transform:scaleX(1.0087)">12/09…</div>
<div class="t gc" style="left:346.2px;top:711.1px;transform-origin:0 0;transform:scaleX(1.0125)">\Tool…</div>
<div class="t gc" style="left:417.8px;top:711.1px;transform-origin:0 0;transform:scaleX(0.9989)">013926</div>
<div class="t gc" style="left:491.8px;top:711.1px;transform-origin:0 0;transform:scaleX(1.0077)">0001</div>
<div class="t gc" style="left:565.5px;top:711.1px;transform-origin:0 0;transform:scaleX(0.8982)">mm</div>
<div class="a" style="left:44px;top:736px;width:595px;height:32px;background:#fefde3"></div>
<div class="a" style="height:2px;background:#e6e8eb;left:44px;top:767px;width:595px"></div>
<div class="a" style="left:20px;top:767px;width:24px;height:2px;background:#c2c9d2"></div>
<div class="t gc" style="left:49.6px;top:743.1px;transform-origin:0 0;transform:scaleX(0.9366)">Flush</div>
<div class="t gc" style="left:123.6px;top:743.1px;transform-origin:0 0;transform:scaleX(1.0272)">0.00</div>
<div class="t gc" style="left:272.3px;top:743.1px;transform-origin:0 0;transform:scaleX(1.0087)">12/09…</div>
<div class="t gc" style="left:346.2px;top:743.1px;transform-origin:0 0;transform:scaleX(1.0125)">\Tool…</div>
<div class="t gc" style="left:417.8px;top:743.1px;transform-origin:0 0;transform:scaleX(0.9989)">013926</div>
<div class="t gc" style="left:491.8px;top:743.1px;transform-origin:0 0;transform:scaleX(1.0077)">0001</div>
<div class="t gc" style="left:565.5px;top:743.1px;transform-origin:0 0;transform:scaleX(0.8982)">mm</div>
<div class="a" style="height:2px;background:#e6e8eb;left:44px;top:799px;width:595px"></div>
<div class="a" style="left:20px;top:799px;width:24px;height:2px;background:#c2c9d2"></div>
<div class="t gc" style="left:49.6px;top:775.1px;transform-origin:0 0;transform:scaleX(0.9074)">Gap</div>
<div class="t gc" style="left:125.0px;top:775.1px;transform-origin:0 0;transform:scaleX(0.9837)">1.95</div>
<div class="t gc" style="left:272.3px;top:775.1px;transform-origin:0 0;transform:scaleX(1.0087)">18/02…</div>
<div class="t gc" style="left:346.2px;top:775.1px;transform-origin:0 0;transform:scaleX(1.0125)">\Tool…</div>
<div class="t gc" style="left:417.8px;top:775.1px;transform-origin:0 0;transform:scaleX(0.9989)">000027</div>
<div class="t gc" style="left:491.8px;top:775.1px;transform-origin:0 0;transform:scaleX(1.0077)">0001</div>
<div class="t gc" style="left:565.5px;top:775.1px;transform-origin:0 0;transform:scaleX(0.8982)">mm</div>
<div class="a" style="height:2px;background:#e6e8eb;left:44px;top:832px;width:595px"></div>
<div class="a" style="left:20px;top:832px;width:24px;height:2px;background:#c2c9d2"></div>
<div class="t gc" style="left:49.6px;top:807.1px;transform-origin:0 0;transform:scaleX(0.9366)">Flush</div>
<div class="t gc" style="left:125.0px;top:807.1px;transform-origin:0 0;transform:scaleX(0.9837)">1.00</div>
<div class="t gc" style="left:272.3px;top:807.1px;transform-origin:0 0;transform:scaleX(1.0087)">18/02…</div>
<div class="t gc" style="left:346.2px;top:807.1px;transform-origin:0 0;transform:scaleX(1.0125)">\Tool…</div>
<div class="t gc" style="left:417.8px;top:807.1px;transform-origin:0 0;transform:scaleX(0.9989)">000027</div>
<div class="t gc" style="left:491.8px;top:807.1px;transform-origin:0 0;transform:scaleX(1.0077)">0001</div>
<div class="t gc" style="left:565.5px;top:807.1px;transform-origin:0 0;transform:scaleX(0.8982)">mm</div>
<div class="a" style="height:2px;background:#e6e8eb;left:44px;top:864px;width:595px"></div>
<div class="a" style="left:20px;top:864px;width:24px;height:2px;background:#c2c9d2"></div>
<div class="t gc" style="left:49.6px;top:840.1px;transform-origin:0 0;transform:scaleX(0.9074)">Gap</div>
<div class="t gc" style="left:125.0px;top:840.1px;transform-origin:0 0;transform:scaleX(0.9837)">1.98</div>
<div class="t gc" style="left:272.3px;top:840.1px;transform-origin:0 0;transform:scaleX(1.0087)">18/02…</div>
<div class="t gc" style="left:346.2px;top:840.1px;transform-origin:0 0;transform:scaleX(1.0125)">\Tool…</div>
<div class="t gc" style="left:417.8px;top:840.1px;transform-origin:0 0;transform:scaleX(0.9989)">000028</div>
<div class="t gc" style="left:491.8px;top:840.1px;transform-origin:0 0;transform:scaleX(1.0077)">0001</div>
<div class="t gc" style="left:565.5px;top:840.1px;transform-origin:0 0;transform:scaleX(0.8982)">mm</div>
<div class="a" style="height:2px;background:#e6e8eb;left:44px;top:896px;width:595px"></div>
<div class="a" style="left:20px;top:896px;width:24px;height:2px;background:#c2c9d2"></div>
<div class="t gc" style="left:49.6px;top:872.1px;transform-origin:0 0;transform:scaleX(0.9366)">Flush</div>
<div class="t gc" style="left:124.4px;top:872.1px;transform-origin:0 0;transform:scaleX(1.0237)">-1.00</div>
<div class="t gc" style="left:272.3px;top:872.1px;transform-origin:0 0;transform:scaleX(1.0087)">18/02…</div>
<div class="t gc" style="left:346.2px;top:872.1px;transform-origin:0 0;transform:scaleX(1.0125)">\Tool…</div>
<div class="t gc" style="left:417.8px;top:872.1px;transform-origin:0 0;transform:scaleX(0.9989)">000028</div>
<div class="t gc" style="left:491.8px;top:872.1px;transform-origin:0 0;transform:scaleX(1.0077)">0001</div>
<div class="t gc" style="left:565.5px;top:872.1px;transform-origin:0 0;transform:scaleX(0.8982)">mm</div>
<div class="a" style="height:2px;background:#e6e8eb;left:44px;top:929px;width:595px"></div>
<div class="a" style="left:20px;top:929px;width:24px;height:2px;background:#c2c9d2"></div>
<div class="t gc" style="left:49.6px;top:904.1px;transform-origin:0 0;transform:scaleX(0.9074)">Gap</div>
<div class="t gc" style="left:125.0px;top:904.1px;transform-origin:0 0;transform:scaleX(0.9837)">1.99</div>
<div class="t gc" style="left:272.3px;top:904.1px;transform-origin:0 0;transform:scaleX(1.0087)">18/02…</div>
<div class="t gc" style="left:346.2px;top:904.1px;transform-origin:0 0;transform:scaleX(1.0125)">\Tool…</div>
<div class="t gc" style="left:417.8px;top:904.1px;transform-origin:0 0;transform:scaleX(0.9989)">000029</div>
<div class="t gc" style="left:491.8px;top:904.1px;transform-origin:0 0;transform:scaleX(1.0077)">0001</div>
<div class="t gc" style="left:565.5px;top:904.1px;transform-origin:0 0;transform:scaleX(0.8982)">mm</div>
<div class="a" style="height:2px;background:#e6e8eb;left:44px;top:961px;width:595px"></div>
<div class="a" style="left:20px;top:961px;width:24px;height:2px;background:#c2c9d2"></div>
<div class="t gc" style="left:49.6px;top:937.1px;transform-origin:0 0;transform:scaleX(0.9366)">Flush</div>
<div class="t gc" style="left:124.4px;top:937.1px;transform-origin:0 0;transform:scaleX(1.0237)">-1.00</div>
<div class="t gc" style="left:272.3px;top:937.1px;transform-origin:0 0;transform:scaleX(1.0087)">18/02…</div>
<div class="t gc" style="left:346.2px;top:937.1px;transform-origin:0 0;transform:scaleX(1.0125)">\Tool…</div>
<div class="t gc" style="left:417.8px;top:937.1px;transform-origin:0 0;transform:scaleX(0.9989)">000029</div>
<div class="t gc" style="left:491.8px;top:937.1px;transform-origin:0 0;transform:scaleX(1.0077)">0001</div>
<div class="t gc" style="left:565.5px;top:937.1px;transform-origin:0 0;transform:scaleX(0.8982)">mm</div>
<div class="vl" style="left:116px;top:702px;height:261px"></div>
<div class="vl" style="left:191px;top:702px;height:261px"></div>
<div class="vl" style="left:264px;top:702px;height:261px"></div>
<div class="vl" style="left:337px;top:702px;height:261px"></div>
<div class="vl" style="left:412px;top:702px;height:261px"></div>
<div class="vl" style="left:486px;top:702px;height:261px"></div>
<div class="vl" style="left:559px;top:702px;height:261px"></div>
<div class="vl" style="left:639px;top:702px;height:261px;background:#e4e7eb"></div>
<svg class="a" style="left:27px;top:711px" width="10" height="14" viewBox="0 0 10 14"><path d="M2 2 L8 7 L2 12Z" fill="#6b7078"/></svg>
<div class="a" style="left:640px;top:702px;width:25px;height:261px;background:linear-gradient(90deg,#ffffff,#f4f5f7)"></div>
<svg class="a" style="left:640px;top:702px" width="25" height="261" viewBox="0 0 25 261"><path d="M6 17 L12.5 11 L19 17Z" fill="#5d636b"/><rect x="4.5" y="29" width="16" height="26" rx="3" fill="#f7f8f9" stroke="#c8ccd2"/><path d="M8 36 H17 M8 39 H17 M8 42 H17 M8 45 H17" stroke="#70757c" stroke-width="1"/><path d="M6 244 L12.5 250 L19 244Z" fill="#5d636b"/></svg>
<div class="a" style="left:16px;top:963px;width:653px;height:34px;background:#d3d8df;border-top:1px solid #bfc5cd"></div>
<div class="a" style="left:228px;top:964px;width:87px;height:33px;background:#e9ecf0;border-left:1px solid #c4cad2;border-right:1px solid #c4cad2"></div>
<div class="t" style="left:37.0px;top:975.6px;font-size:16.5px;color:#4b505a;transform-origin:0 0;transform:scaleX(1.0039)">Properties</div>
<div class="t" style="left:147.0px;top:975.6px;font-size:16.5px;color:#4b505a;transform-origin:0 0;transform:scaleX(0.9893)">Loggers</div>
<div class="t" style="left:240.8px;top:975.6px;font-size:16.5px;color:#4b505a;transform-origin:0 0;transform:scaleX(0.9849)">Results</div>
<div class="a" style="left:11px;top:217px;width:2px;height:780px;background:#a9b0b8"></div>
<div class="a" style="left:1577px;top:217px;width:2px;height:780px;background:#a9b0b8"></div>
<div class="a" style="left:676px;top:219px;width:901px;height:41px;background:#e8ebef"></div>
<div class="a" style="left:817px;top:229px;width:156px;height:31px;background:linear-gradient(#e2e6eb,#d4d9e0);border:1px solid #aab1ba;border-bottom:none;border-radius:2px 2px 0 0"></div>
<div class="a" style="left:680px;top:226px;width:138px;height:35px;background:#e9ecf0;border:1px solid #a3aab3;border-bottom:none;border-radius:3px 3px 0 0;z-index:1"></div>
<div class="t" style="left:692.6px;top:236.6px;font-size:16.5px;color:#4b505a;z-index:2;transform-origin:0 0;transform:scaleX(0.9850)">Workspace</div>
<svg class="a" style="left:792px;top:236px;z-index:2" width="16" height="16" viewBox="0 0 16 16"><path d="M3 3 L14 11 M14 3 L3 11" stroke="#555b63" stroke-width="2.8"/></svg>
<div class="t" style="left:827.8px;top:237.6px;font-size:16.5px;color:#4b505a;transform-origin:0 0;transform:scaleX(0.9791)">Check plan 12</div>
<svg class="a" style="left:1548px;top:235px" width="14" height="10" viewBox="0 0 14 10"><path d="M1 2 L13 2 L7 8Z" fill="#5d636b"/></svg>
<svg class="a" style="left:676px;top:259px" width="898" height="738" viewBox="676 259 898 738">
<rect x="676" y="259" width="898" height="738" fill="#ffffff"/>
<path d="M683.67 259V997 M696.02 259V997 M708.38 259V997 M720.73 259V997 M733.09 259V997 M745.44 259V997 M770.15 259V997 M782.51 259V997 M794.87 259V997 M807.22 259V997 M819.57 259V997 M831.93 259V997 M844.28 259V997 M856.64 259V997 M869.00 259V997 M893.70 259V997 M906.06 259V997 M918.41 259V997 M930.77 259V997 M943.12 259V997 M955.48 259V997 M967.83 259V997 M980.19 259V997 M992.54 259V997 M1017.25 259V997 M1029.61 259V997 M1041.96 259V997 M1054.32 259V997 M1066.67 259V997 M1079.03 259V997 M1091.38 259V997 M1103.74 259V997 M1116.10 259V997 M1140.80 259V997 M1153.16 259V997 M1165.51 259V997 M1177.87 259V997 M1190.22 259V997 M1202.58 259V997 M1214.93 259V997 M1227.29 259V997 M1239.64 259V997 M1264.36 259V997 M1276.71 259V997 M1289.07 259V997 M1301.42 259V997 M1313.78 259V997 M1326.13 259V997 M1338.49 259V997 M1350.84 259V997 M1363.19 259V997 M1387.90 259V997 M1400.26 259V997 M1412.62 259V997 M1424.97 259V997 M1437.32 259V997 M1449.68 259V997 M1462.03 259V997 M1474.39 259V997 M1486.74 259V997 M1511.45 259V997 M1523.81 259V997 M1536.16 259V997 M1548.52 259V997 M1560.88 259V997 M1573.23 259V997 M676 264.95H1574 M676 277.28H1574 M676 289.61H1574 M676 301.94H1574 M676 314.27H1574 M676 338.93H1574 M676 351.26H1574 M676 363.59H1574 M676 375.92H1574 M676 388.25H1574 M676 400.58H1574 M676 412.91H1574 M676 425.24H1574 M676 437.57H1574 M676 462.23H1574 M676 474.56H1574 M676 486.89H1574 M676 499.22H1574 M676 511.55H1574 M676 523.88H1574 M676 536.21H1574 M676 548.54H1574 M676 560.87H1574 M676 585.53H1574 M676 597.86H1574 M676 610.19H1574 M676 622.52H1574 M676 634.85H1574 M676 647.18H1574 M676 659.51H1574 M676 671.84H1574 M676 684.17H1574 M676 708.83H1574 M676 721.16H1574 M676 733.49H1574 M676 745.82H1574 M676 758.15H1574 M676 770.48H1574 M676 782.81H1574 M676 795.14H1574 M676 807.47H1574 M676 832.13H1574 M676 844.46H1574 M676 856.79H1574 M676 869.12H1574 M676 881.45H1574 M676 893.78H1574 M676 906.11H1574 M676 918.44H1574 M676 930.77H1574 M676 955.43H1574 M676 967.76H1574 M676 980.09H1574 M676 992.42H1574" stroke="#e7e7e7" stroke-width="2.2" fill="none"/>
<path d="M757.80 259V997 M881.35 259V997 M1004.90 259V997 M1128.45 259V997 M1252.00 259V997 M1375.55 259V997 M1499.10 259V997 M676 326.60H1574 M676 449.90H1574 M676 573.20H1574 M676 696.50H1574 M676 819.80H1574 M676 943.10H1574" stroke="#d6d6d6" stroke-width="2" fill="none"/>
</svg>
<div class="a" style="left:675px;top:259px;width:2px;height:738px;background:#a3aab3"></div>
<div class="a" style="left:675px;top:259px;width:900px;height:1px;background:#a3aab3"></div>
<div class="a" style="left:1574px;top:259px;width:3px;height:738px;background:#c9ced5"></div>

<svg class="a" style="left:-284px;top:-159px;z-index:3" width="2160" height="1500" viewBox="0 0 2160 1500">
<defs>
 <linearGradient id="tg" x1="0" y1="0" x2="1" y2="1"><stop offset="0" stop-color="#626262"/><stop offset="1" stop-color="#9c9c9c"/></linearGradient>
 <linearGradient id="bg2" x1="0" y1="0" x2="1" y2="1"><stop offset="0" stop-color="#555"/><stop offset="1" stop-color="#8a8a8a"/></linearGradient>
 <clipPath id="cv"><rect x="961" y="419" width="897" height="737"/></clipPath>
</defs>
<g clip-path="url(#cv)" font-family="Liberation Sans, sans-serif">
 <!-- blue fills -->
 <path d="M1000 762.5 L1347 776 L1346.5 834.2 L1000 821.4Z" fill="#cbe3fa"/>
 <path d="M1468 780 L1816 793.6 L1815 851.8 L1468 840Z" fill="#cbe3fa"/>
 <!-- red lines -->
 <path d="M1000.5 762 L1348.6 775.8" stroke="#ff0d0d" stroke-width="4" fill="none"/>
 <path d="M1469 783 Q1470 779 1475 779.8 L1816.9 793.6" stroke="#ff0d0d" stroke-width="4" fill="none"/>
 <!-- labels 1 -->
 <text x="1177" y="799" font-size="19" fill="#1c2a66" text-anchor="middle">1</text>
 <text x="1646" y="817" font-size="19" fill="#1c2a66" text-anchor="middle">1</text>
 <!-- LHS / RHS lines -->
 <path d="M1177.4 428 V767" stroke="#4a4a4a" stroke-width="1.7" fill="none"/>
 <path d="M1640.4 428 V784" stroke="#4a4a4a" stroke-width="1.7" fill="none"/>
 <rect x="1177" y="428" width="15" height="22" fill="#ececec" stroke="#555" stroke-width="1.5"/>
 <text x="1179.5" y="446" font-size="16" fill="#333">1</text>
 <rect x="1640" y="428" width="16.5" height="22" fill="#ececec" stroke="#555" stroke-width="1.5"/>
 <text x="1643" y="446" font-size="16" fill="#333">2</text>
 <rect x="1177" y="466.5" width="48" height="30" fill="#e9e9e9" stroke="#555" stroke-width="1.8"/>
 <text x="1179.5" y="491.5" font-size="22" fill="#3a3a3a" textLength="38" lengthAdjust="spacingAndGlyphs">LHS</text>
 <rect x="1640" y="466.5" width="48" height="30" fill="#e9e9e9" stroke="#555" stroke-width="1.8"/>
 <text x="1642.5" y="491.5" font-size="22" fill="#3a3a3a" textLength="42" lengthAdjust="spacingAndGlyphs">RHS</text>
 <!-- texts -->
 <text x="989.4" y="451" font-size="17" fill="#3a3a3a" textLength="288.6" lengthAdjust="spacingAndGlyphs">Mouse: (-34.026mm, -20.285mm)</text>
 <text x="989.4" y="469" font-size="17" fill="#3a3a3a" textLength="130" lengthAdjust="spacingAndGlyphs">Rotation: 0.00°</text>
 <text x="991" y="572.3" font-size="32" fill="#111" textLength="228" lengthAdjust="spacingAndGlyphs">#13926 PanelGF</text>
 <text x="989.4" y="610.6" font-size="32" fill="#111" textLength="184" lengthAdjust="spacingAndGlyphs">Gap: 9.88mm</text>
 <text x="989.4" y="649" font-size="32" fill="#111" textLength="202" lengthAdjust="spacingAndGlyphs">Flush: 0.00mm</text>
 <text x="990.9" y="1136.4" font-size="31" fill="#111" textLength="140.5" lengthAdjust="spacingAndGlyphs">x2.2 [mm]</text>
 <text x="1780.3" y="1155.5" font-size="18.5" fill="#222" textLength="64.6" lengthAdjust="spacingAndGlyphs">8.1.494</text>
 <!-- green markers -->
 <g fill="#0f6e0f">
  <path d="M1158 758 L1166 758 L1162 764Z"/>
  <path d="M1336 767 L1344 767 L1340 773Z"/>
  <path d="M1472 771 L1480 771 L1476 777Z"/>
  <path d="M1650 776 L1658 776 L1654 782Z"/>
 </g>
 <circle cx="1340" cy="776" r="5" fill="#9a9a9a" opacity="0.8"/>
 <path d="M1349 766 V775 M1001 757 V767 M1468 774 V783 M1817 787 V797" stroke="#2bb52b" stroke-width="1.5"/>
 <!-- gap dims -->
 <path d="M1354 774.7 L1400 776 M1421 777.5 L1462 778" stroke="#3a3a3a" stroke-width="1.5" stroke-dasharray="5 5" fill="none"/>
 <path d="M1346.6 781 V839 M1468 790 V842" stroke="#3a3a3a" stroke-width="1.8" stroke-dasharray="5 4" fill="none"/>
 <path d="M1346 840 L1374 840.5 L1414 842 L1464 844" stroke="#3a3a3a" stroke-width="2" fill="none"/>
 <path d="M1466 839 V848 M1410 769 V782" stroke="#3a3a3a" stroke-width="2"/>
 <text transform="translate(1407,775) rotate(-90)" font-size="9" fill="#333" textLength="37" lengthAdjust="spacingAndGlyphs">4.78mm</text>
 <text x="1390" y="835" font-size="9" fill="#333" textLength="33" lengthAdjust="spacingAndGlyphs">9.85mm</text>
 <!-- nav controls -->
 <path d="M1751.8 429 L1772.7 450 L1730.2 450Z" fill="url(#tg)"/>
 <path d="M1730.2 527.7 L1772.7 527.7 L1751.8 548.1Z" fill="url(#tg)"/>
 <path d="M1694.5 488.6 L1716.6 467.6 L1716.6 509.5Z" fill="url(#tg)"/>
 <path d="M1790.3 467.6 L1811.8 488.6 L1790.3 509.5Z" fill="url(#tg)"/>
 <rect x="1739.5" y="478" width="23.5" height="22.5" fill="#fdfdfd"/>
 <path d="M1751.2 467.2 L1761.5 477.6 L1741 477.6Z M1729 489.4 L1739.2 479.5 L1739.2 499.3Z M1772.9 489.4 L1763 479.8 L1763 499.3Z M1741 500.2 L1761.5 500.2 L1751.2 511.5Z" fill="url(#tg)"/>
 <path d="M1751.2 477.5 V500.5" stroke="#a0a0a0" stroke-width="1.3"/>
 <path d="M1739.5 489.4 H1763" stroke="#b4b4b4" stroke-width="1.6"/>
 <path d="M1745.5 480 V486 M1757 480 V486 M1745.5 493 V499 M1757 493 V499 M1741 485 H1749 M1753 485 H1761 M1741 497 H1749 M1753 497 H1761" stroke="#e6e6e6" stroke-width="1"/>
 <rect x="1826.6" y="428.5" width="22" height="22" fill="url(#bg2)"/>
 <path d="M1836 434 H1839.5 V438 H1843.5 V441.5 H1839.5 V445.5 H1836 V441.5 H1832 V438 H1836Z" fill="#fff" stroke="#2a2a2a" stroke-width="0.9"/>
 <path d="M1837.9 454 V470 M1837.9 485 V525" stroke="#8f8f8f" stroke-width="3" stroke-dasharray="3 6"/>
 <path d="M1837.9 484 V496" stroke="#8a8a8a" stroke-width="3.5"/>
 <rect x="1827" y="471" width="21.5" height="11.5" rx="1.5" fill="#fff" stroke="#111" stroke-width="1.8"/>
 <path d="M1831 476.8 H1844" stroke="#777" stroke-width="3"/>
 <rect x="1826.6" y="527.1" width="22" height="21" fill="url(#bg2)"/>
 <rect x="1832.5" y="535.5" width="10" height="4" fill="#fff" stroke="#2a2a2a" stroke-width="0.9"/>
 <rect x="1694.5" y="557.7" width="22" height="21.5" fill="url(#bg2)"/>
 <rect x="1760.8" y="557.7" width="21" height="21.5" fill="url(#bg2)"/>
 <rect x="1826.6" y="557.7" width="22" height="21.5" fill="url(#bg2)"/>
 <g fill="none" stroke-linecap="round" stroke-linejoin="round">
  <path d="M1700.5 564 A6.2 6.2 0 1 1 1700 572" stroke="#1e1e1e" stroke-width="4.2"/>
  <path d="M1699 559.5 L1700.5 564.5 L1705.5 563.5" stroke="#1e1e1e" stroke-width="3.6"/>
  <path d="M1700.5 564 A6.2 6.2 0 1 1 1700 572" stroke="#fff" stroke-width="2.2"/>
  <path d="M1699 559.5 L1700.5 564.5 L1705.5 563.5" stroke="#fff" stroke-width="1.8"/>
  <path d="M1843 564 A6.2 6.2 0 1 0 1843.5 572" stroke="#1e1e1e" stroke-width="4.2"/>
  <path d="M1844.5 559 L1843 564.5 L1838 563.5" stroke="#1e1e1e" stroke-width="3.6"/>
  <path d="M1843 564 A6.2 6.2 0 1 0 1843.5 572" stroke="#fff" stroke-width="2.2"/>
  <path d="M1844.5 559 L1843 564.5 L1838 563.5" stroke="#fff" stroke-width="1.8"/>
  <path d="M1766 563 H1776.5 L1767 573.5 H1777.5" stroke="#1e1e1e" stroke-width="4"/>
  <path d="M1766 563 H1776.5 L1767 573.5 H1777.5" stroke="#fff" stroke-width="2"/>
 </g>
 <path d="M1722 568 H1725 M1729.5 568 H1733 M1737.5 568 H1740 M1744 568 H1755 M1787 568 H1798 M1802 568 H1805 M1809 568 H1812.5 M1816.5 568 H1820" stroke="#8c8c8c" stroke-width="4"/>
 <!-- scale bar -->
 <path d="M1095.2 1089.5 V1117.2 H1219.8 V1089.5 M1157.5 1089.5 V1117" stroke="#4a4a4a" stroke-width="2.6" fill="none" stroke-linejoin="round"/>
 <path d="M1107.6 1099 V1117 M1120 1099 V1117 M1132.5 1099 V1117 M1145 1099 V1117 M1170 1099 V1117 M1182.5 1099 V1117 M1195 1099 V1117 M1207.5 1099 V1117" stroke="#4a4a4a" stroke-width="2.8"/>
 <text x="1107" y="1089" font-size="13" fill="#333" textLength="30.8" lengthAdjust="spacingAndGlyphs">1mm</text>
 <text x="1219.8" y="1132" font-size="13" fill="#333" textLength="37.2" lengthAdjust="spacingAndGlyphs">10mm</text>
 <text x="1096" y="1132" font-size="13" fill="#333" textLength="28" lengthAdjust="spacingAndGlyphs">0mm</text>
</g>
</svg>

</div>

</body></html>
